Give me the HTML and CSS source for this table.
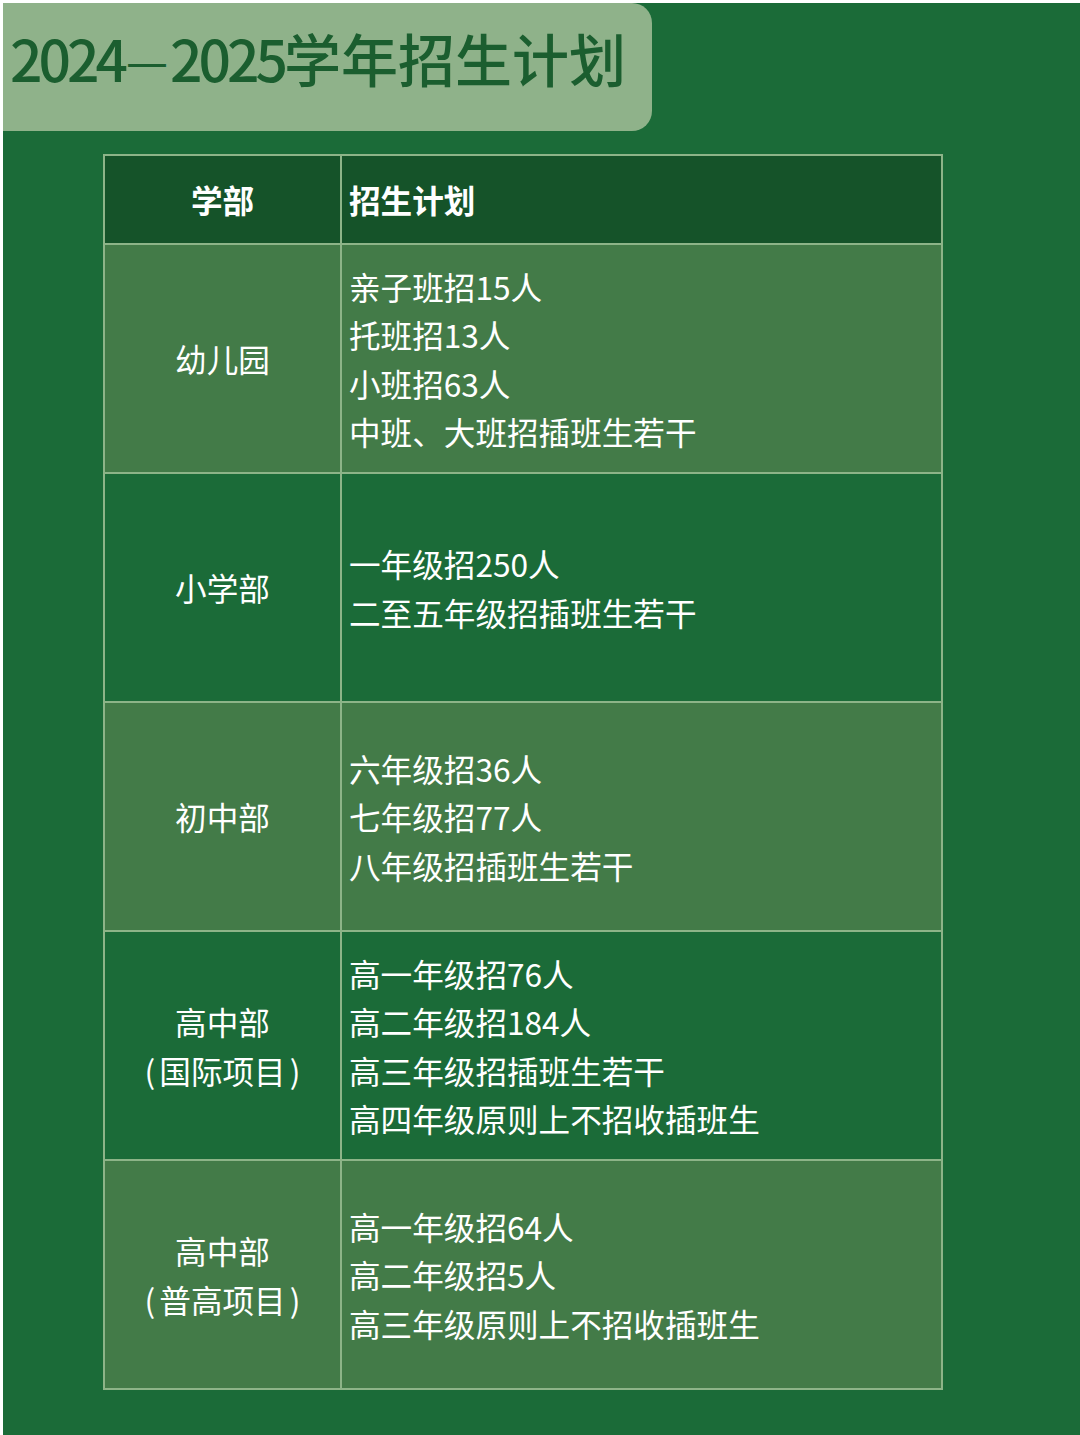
FILE: index.html
```html
<!DOCTYPE html>
<html lang="zh-CN">
<head>
<meta charset="utf-8">
<title>2024—2025学年招生计划</title>
<link rel="stylesheet" href="styles.css">
</head>
<body>
<main class="page">
  <header class="title-box">
    <h1 class="title"><span class="num">2024</span><span class="dash">—</span><span class="num">2025</span>学年招生计划</h1>
  </header>
  <table class="plan">
    <thead>
      <tr>
        <th class="dept">学部</th>
        <th class="detail">招生计划</th>
      </tr>
    </thead>
    <tbody>
      <tr class="light">
        <td class="dept">幼儿园</td>
        <td class="detail">亲子班招15人<br>托班招13人<br>小班招63人<br>中班、大班招插班生若干</td>
      </tr>
      <tr class="dark">
        <td class="dept">小学部</td>
        <td class="detail">一年级招250人<br>二至五年级招插班生若干</td>
      </tr>
      <tr class="light">
        <td class="dept">初中部</td>
        <td class="detail">六年级招36人<br>七年级招77人<br>八年级招插班生若干</td>
      </tr>
      <tr class="dark">
        <td class="dept">高中部<br><span class="paren">(</span>国际项目<span class="paren">)</span></td>
        <td class="detail">高一年级招76人<br>高二年级招184人<br>高三年级招插班生若干<br>高四年级原则上不招收插班生</td>
      </tr>
      <tr class="light">
        <td class="dept">高中部<br><span class="paren">(</span>普高项目<span class="paren">)</span></td>
        <td class="detail">高一年级招64人<br>高二年级招5人<br>高三年级原则上不招收插班生</td>
      </tr>
    </tbody>
  </table>
</main>
</body>
</html>
```

FILE: styles.css
```css
html, body {
  margin: 0;
  padding: 0;
  background: #ffffff;
}

body {
  font-family: "Noto Sans CJK SC", "Noto Sans", sans-serif;
}

.page {
  margin: 3px 0 0 3px;
  width: 1077px;
  height: 1432px;
  background: #1b6b38;
  overflow: hidden;
}

.title-box {
  width: 649px;
  height: 128px;
  background: #8fb28a;
  border-radius: 0 20px 20px 0;
  display: flex;
  align-items: center;
  box-sizing: border-box;
  padding-left: 7px;
  padding-bottom: 20px;
}

.title {
  margin: 0;
  font-size: 57px;
  font-weight: 500;
  line-height: 1;
  color: #1b5e2f;
  white-space: nowrap;
}

.title .num {
  letter-spacing: -4px;
}

.title .dash {
  display: inline-block;
  width: 46px;
  text-align: center;
  font-family: "DejaVu Sans", sans-serif;
  font-size: 42px;
  font-weight: 400;
  line-height: 1;
  vertical-align: 5px;
}

.plan {
  margin: 23px 0 0 100px;
  width: 840px;
  border-collapse: collapse;
  color: #ffffff;
  font-size: 31.6px;
  line-height: 48.5px;
}

.plan th,
.plan td {
  border: 2px solid #8db488;
  padding: 0 7px;
  vertical-align: middle;
}

.plan thead tr {
  height: 89px;
  background: #155329;
}

.plan th {
  font-weight: 700;
}

.plan tbody tr {
  height: 229px;
}

.plan tr.light {
  background: #437b48;
}

.plan tr.dark {
  background: #1b6b38;
}

.plan .dept {
  width: 221px;
  text-align: center;
}

.plan .detail {
  text-align: left;
}

.paren {
  display: inline-block;
  padding: 0 4px;
}
```
